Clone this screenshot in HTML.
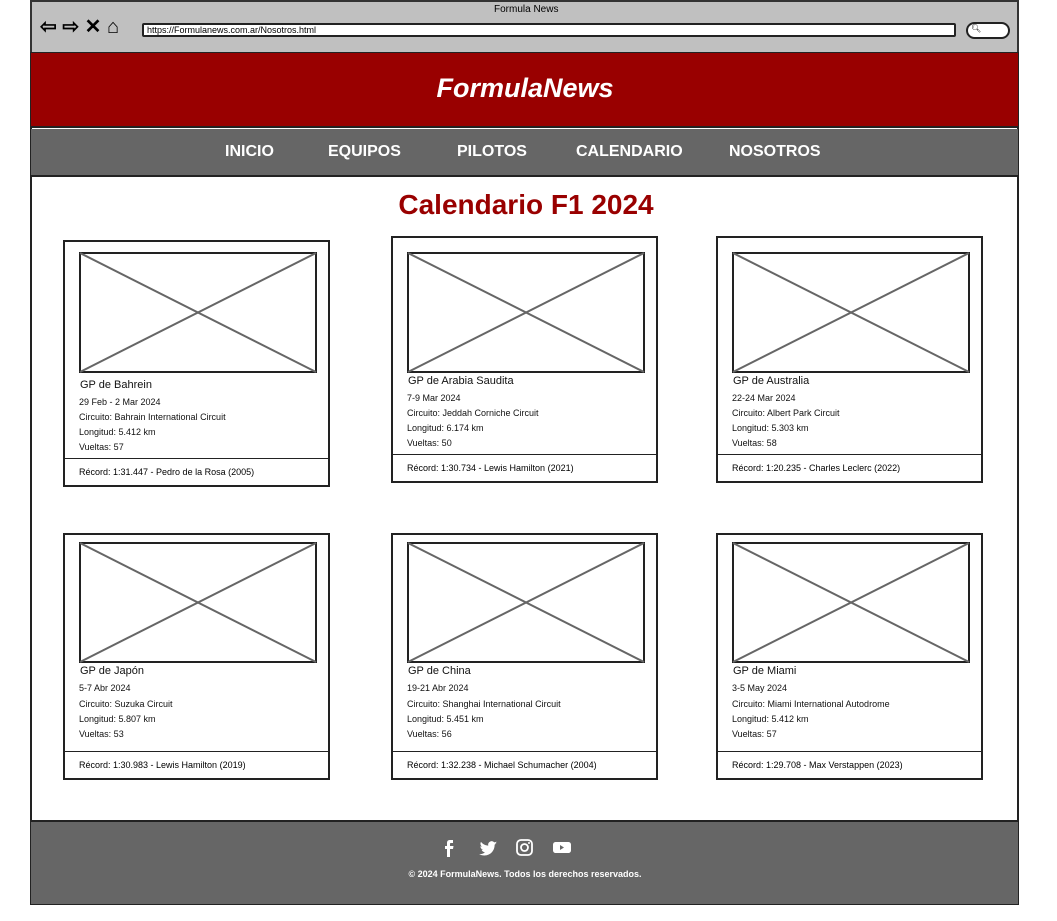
<!DOCTYPE html>
<html><head><meta charset="utf-8"><style>
*{margin:0;padding:0;box-sizing:border-box}
body{width:1057px;height:921px;background:#fff;font-family:"Liberation Sans",sans-serif;position:relative;overflow:hidden}
.abs{position:absolute}
.card{position:absolute;width:267px;height:247px;border:2px solid #222;background:#fff}
.card svg{position:absolute;left:14px;top:10px}
.r2 svg{top:7px}
.c2 svg{top:14px}
.t{position:absolute;left:15px;font-size:11px;color:#111}
.s{position:absolute;left:14px;font-size:9px;color:#111}
.hr{position:absolute;left:0;right:0;top:216px;border-top:1.5px solid #222}
.rec{position:absolute;left:14px;top:225px;font-size:9px}
.nav span{position:absolute;top:143px;color:#fff;font-weight:bold;font-size:16px}
</style></head><body>
<div class="abs" style="left:30px;top:0;width:989px;height:53px;background:#c0c0c0;border:2px solid #333;border-bottom:none"></div>
<div class="abs" style="left:494px;top:4px;font-size:10px">Formula News</div>
<div class="abs" style="left:40px;top:14px;font-size:20px;font-weight:bold">⇦ ⇨ ✕ ⌂</div>
<div class="abs" style="left:142px;top:23px;width:814px;height:14px;background:#fff;border:2px solid #222;border-radius:2px;font-size:9px;padding-left:3px;line-height:10px">https://Formulanews.com.ar/Nosotros.html</div>
<div class="abs" style="left:966px;top:22px;width:44px;height:17px;background:#fff;border:2px solid #222;border-radius:9px;font-size:8px;padding-left:3px">🔍︎</div>
<div class="abs" style="left:30px;top:52px;width:989px;height:853px;border:2px solid #222"></div>
<div class="abs" style="left:31px;top:53px;width:987px;height:75px;background:#990000;border-bottom:2px solid #222"></div>
<div class="abs" style="left:0;width:1050px;top:73px;text-align:center;color:#fff;font-size:27px;font-weight:bold;font-style:italic">FormulaNews</div>
<div class="abs nav" style="left:31px;top:129px;width:987px;height:48px;background:#666;border-bottom:2px solid #222"></div>
<div class="nav"><span style="left:225px">INICIO</span><span style="left:328px">EQUIPOS</span><span style="left:457px">PILOTOS</span><span style="left:576px">CALENDARIO</span><span style="left:729px">NOSOTROS</span></div>
<div class="abs" style="left:0;width:1052px;top:189px;text-align:center;color:#990000;font-size:28px;font-weight:bold">Calendario F1 2024</div>

<div class="card" style="left:63px;top:240px"><svg width="238" height="121"><rect x="1" y="1" width="236" height="119" fill="#fff" stroke="#222" stroke-width="2"/><path d="M1 1L237 120M237 1L1 120" stroke="#666" stroke-width="2"/></svg>
<div class="t" style="top:137px">GP de Bahrein</div><div class="s" style="top:155px">29 Feb - 2 Mar 2024</div><div class="s" style="top:170px">Circuito: Bahrain International Circuit</div><div class="s" style="top:185px">Longitud: 5.412 km</div><div class="s" style="top:200px">Vueltas: 57</div><div class="hr"></div><div class="rec">Récord: 1:31.447 - Pedro de la Rosa (2005)</div></div>

<div class="card c2" style="left:391px;top:236px"><svg width="238" height="121"><rect x="1" y="1" width="236" height="119" fill="#fff" stroke="#222" stroke-width="2"/><path d="M1 1L237 120M237 1L1 120" stroke="#666" stroke-width="2"/></svg>
<div class="t" style="top:137px">GP de Arabia Saudita</div><div class="s" style="top:155px">7-9 Mar 2024</div><div class="s" style="top:170px">Circuito: Jeddah Corniche Circuit</div><div class="s" style="top:185px">Longitud: 6.174 km</div><div class="s" style="top:200px">Vueltas: 50</div><div class="hr"></div><div class="rec">Récord: 1:30.734 - Lewis Hamilton (2021)</div></div>

<div class="card c2" style="left:716px;top:236px"><svg width="238" height="121"><rect x="1" y="1" width="236" height="119" fill="#fff" stroke="#222" stroke-width="2"/><path d="M1 1L237 120M237 1L1 120" stroke="#666" stroke-width="2"/></svg>
<div class="t" style="top:137px">GP de Australia</div><div class="s" style="top:155px">22-24 Mar 2024</div><div class="s" style="top:170px">Circuito: Albert Park Circuit</div><div class="s" style="top:185px">Longitud: 5.303 km</div><div class="s" style="top:200px">Vueltas: 58</div><div class="hr"></div><div class="rec">Récord: 1:20.235 - Charles Leclerc (2022)</div></div>

<div class="card r2" style="left:63px;top:533px"><svg width="238" height="121"><rect x="1" y="1" width="236" height="119" fill="#fff" stroke="#222" stroke-width="2"/><path d="M1 1L237 120M237 1L1 120" stroke="#666" stroke-width="2"/></svg>
<div class="t" style="top:130px">GP de Japón</div><div class="s" style="top:148px">5-7 Abr 2024</div><div class="s" style="top:164px">Circuito: Suzuka Circuit</div><div class="s" style="top:179px">Longitud: 5.807 km</div><div class="s" style="top:194px">Vueltas: 53</div><div class="hr"></div><div class="rec">Récord: 1:30.983 - Lewis Hamilton (2019)</div></div>

<div class="card r2" style="left:391px;top:533px"><svg width="238" height="121"><rect x="1" y="1" width="236" height="119" fill="#fff" stroke="#222" stroke-width="2"/><path d="M1 1L237 120M237 1L1 120" stroke="#666" stroke-width="2"/></svg>
<div class="t" style="top:130px">GP de China</div><div class="s" style="top:148px">19-21 Abr 2024</div><div class="s" style="top:164px">Circuito: Shanghai International Circuit</div><div class="s" style="top:179px">Longitud: 5.451 km</div><div class="s" style="top:194px">Vueltas: 56</div><div class="hr"></div><div class="rec">Récord: 1:32.238 - Michael Schumacher (2004)</div></div>

<div class="card r2" style="left:716px;top:533px"><svg width="238" height="121"><rect x="1" y="1" width="236" height="119" fill="#fff" stroke="#222" stroke-width="2"/><path d="M1 1L237 120M237 1L1 120" stroke="#666" stroke-width="2"/></svg>
<div class="t" style="top:130px">GP de Miami</div><div class="s" style="top:148px">3-5 May 2024</div><div class="s" style="top:164px">Circuito: Miami International Autodrome</div><div class="s" style="top:179px">Longitud: 5.412 km</div><div class="s" style="top:194px">Vueltas: 57</div><div class="hr"></div><div class="rec">Récord: 1:29.708 - Max Verstappen (2023)</div></div>

<div class="abs" style="left:31px;top:820px;width:987px;height:84px;background:#666;border-top:2px solid #222"></div>
<svg class="abs" style="left:440px;top:838px" width="140" height="20" fill="#fff">
<path d="M13 2h-3c-2 0-3 1-3 3v3H5v3h2v8h3v-8h3l.5-3H10V6c0-1 .5-1 1-1h2z"/>
<path d="M57 5c-.7.3-1.4.5-2 .6.7-.5 1.3-1.1 1.5-2-.7.4-1.5.7-2.2.8a3.5 3.5 0 0 0-6 3.2c-3-.1-5.6-1.5-7.3-3.7-1 1.6-.5 3.7 1 4.7-.6 0-1.100-.2-1.6-.4 0 1.700 1.2 3.2 2.8 3.5-.5.1-1.1.2-1.6.1.5 1.4 1.8 2.4 3.3 2.4A7 7 0 0 1 39 16c1.5 1 3.4 1.5 5.4 1.5 6.6 0 10.2-5.5 10.2-10.2v-.5c.9-.6 1.6-1.3 2.2-2z"/>
<rect x="77" y="2" width="15" height="15" rx="4" fill="none" stroke="#fff" stroke-width="1.8"/><circle cx="84.5" cy="9.5" r="3.5" fill="none" stroke="#fff" stroke-width="1.8"/><circle cx="89" cy="5" r="1"/>
<path d="M116 4h12c2 0 3 1 3 3v5c0 2-1 3-3 3h-12c-2 0-3-1-3-3V7c0-2 1-3 3-3zm4 3v5l4-2.5z" fill-rule="evenodd"/>
</svg>
<div class="abs" style="left:0;width:1050px;top:869px;text-align:center;color:#fff;font-size:9px;font-weight:bold">© 2024 FormulaNews. Todos los derechos reservados.</div>
</body></html>
